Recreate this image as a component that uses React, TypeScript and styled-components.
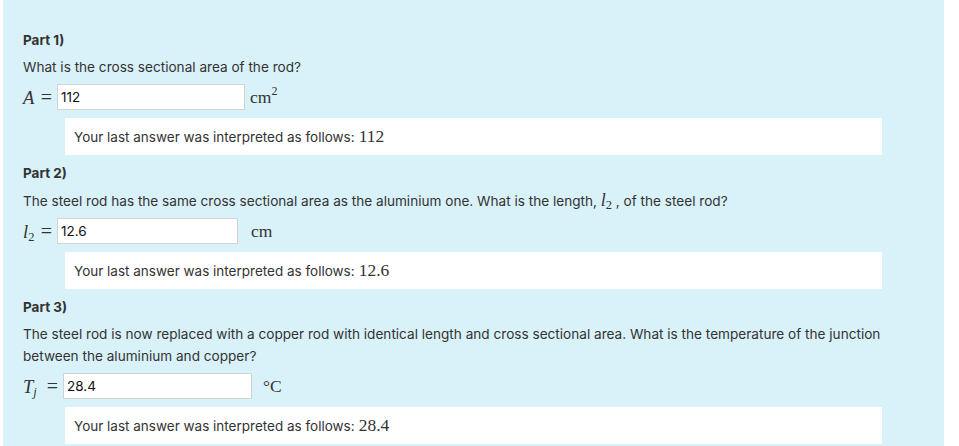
import React from 'react'
import styled, { createGlobalStyle } from 'styled-components';

const GlobalStyle = createGlobalStyle`
  body {
    margin: 0;
    background: #ffffff;
    font-family: Inter, "Noto Sans", sans-serif;
    color: #333333;
  }
`;

const Panel = styled.main`
  width: 921px;
  margin-left: 3px;
  padding: 29px 0 2px 20px;
  background: #d9f1f9;
`;

const Part = styled.section`
  margin-bottom: 7px;
  &:last-child {
    margin-bottom: 0;
  }
`;

const Title = styled.h4`
  margin: 0 0 5px;
  font-size: 13.5px;
  line-height: 22px;
  font-weight: 700;
`;

const Question = styled.p`
  margin: 0 0 6px;
  font-size: 13.6px;
  line-height: 22px;
  max-width: 890px;
`;

const Var = styled.i`
  font-family: "Liberation Serif", "DejaVu Serif", serif;
  font-size: 18px;
`;

const Sub = styled.sub<{ $italic?: boolean }>`
  font-family: "Liberation Serif", "DejaVu Serif", serif;
  font-size: 12.5px;
  font-style: ${(p) => (p.$italic ? 'italic' : 'normal')};
  vertical-align: -3px;
  line-height: 0;
`;

const InputRow = styled.div`
  display: flex;
  align-items: center;
  height: 26px;
`;

const Label = styled.span<{ $width: number }>`
  box-sizing: border-box;
  width: ${(p) => p.$width}px;
  flex-shrink: 0;
  padding-right: 5px;
  display: flex;
  align-items: baseline;
  justify-content: space-between;
  font-family: "Liberation Serif", "DejaVu Serif", serif;
  font-size: 18.5px;
  white-space: nowrap;
`;

const Equals = styled.span`
  font-size: 20px;
`;

const Field = styled.input<{ $width: number }>`
  box-sizing: border-box;
  width: ${(p) => p.$width}px;
  height: 26px;
  margin: 0;
  padding: 0 3px;
  border: 1px solid #d2d2d2;
  background: #ffffff;
  font-family: Inter, "Noto Sans", sans-serif;
  font-size: 13.5px;
  color: #111111;
  outline: none;
`;

const Unit = styled.span<{ $gap: number }>`
  margin-left: ${(p) => p.$gap}px;
  font-family: "Liberation Serif", "DejaVu Serif", serif;
  font-size: 17.5px;
  color: #333333;
  sup {
    font-size: 12px;
    vertical-align: 8px;
    line-height: 0;
  }
`;

const Feedback = styled.div`
  margin: 8px 0 0 42px;
  width: 808px;
  height: 37px;
  padding-left: 9px;
  display: flex;
  align-items: center;
  background: #ffffff;
  font-size: 13.5px;
`;

const FeedbackValue = styled.span`
  margin-left: 4px;
  font-family: "Liberation Serif", "DejaVu Serif", serif;
  font-size: 17.5px;
`;

interface PartData {
  title: string;
  question: React.ReactNode;
  label: React.ReactNode;
  labelWidth: number;
  value: string;
  fieldWidth: number;
  unit: React.ReactNode;
  unitGap: number;
}

const parts: PartData[] = [
  {
    title: 'Part 1)',
    question: 'What is the cross sectional area of the rod?',
    label: <i>A</i>,
    labelWidth: 34,
    value: '112',
    fieldWidth: 188,
    unit: <>cm<sup>2</sup></>,
    unitGap: 5,
  },
  {
    title: 'Part 2)',
    question: (
      <>
        The steel rod has the same cross sectional area as the aluminium one. What is the length,{' '}
        <Var>l</Var><Sub>2</Sub> , of the steel rod?
      </>
    ),
    label: <span><i>l</i><Sub>2</Sub></span>,
    labelWidth: 34,
    value: '12.6',
    fieldWidth: 181,
    unit: <>cm</>,
    unitGap: 13,
  },
  {
    title: 'Part 3)',
    question:
      'The steel rod is now replaced with a copper rod with identical length and cross sectional area. What is the temperature of the junction between the aluminium and copper?',
    label: <span><i>T</i><Sub $italic>j</Sub></span>,
    labelWidth: 40,
    value: '28.4',
    fieldWidth: 189,
    unit: <>°C</>,
    unitGap: 11,
  },
];

const App = () => {
  return (
    <>
      <GlobalStyle />
      <Panel>
        {parts.map((part) => (
          <Part key={part.title}>
            <Title>{part.title}</Title>
            <Question>{part.question}</Question>
            <InputRow>
              <Label $width={part.labelWidth}>
                {part.label}
                <Equals>=</Equals>
              </Label>
              <Field $width={part.fieldWidth} defaultValue={part.value} readOnly />
              <Unit $gap={part.unitGap}>{part.unit}</Unit>
            </InputRow>
            <Feedback>
              Your last answer was interpreted as follows:
              <FeedbackValue>{part.value}</FeedbackValue>
            </Feedback>
          </Part>
        ))}
      </Panel>
    </>
  )
}

export default App
